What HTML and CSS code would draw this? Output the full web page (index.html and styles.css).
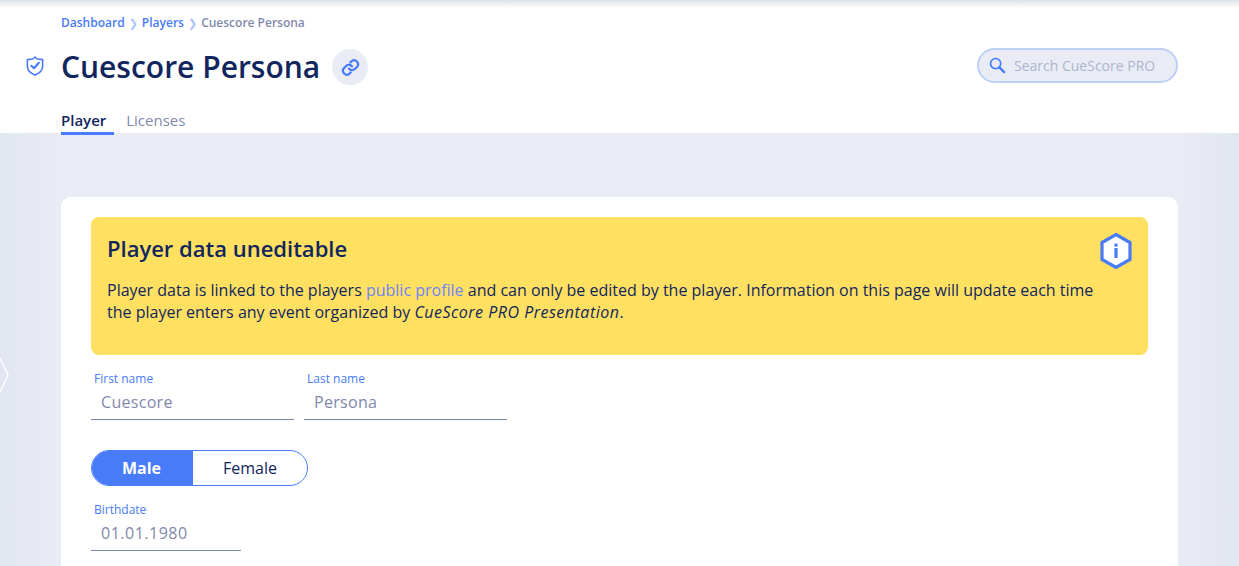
FILE: index.html
```html
<!DOCTYPE html>
<html lang="en">
<head>
<meta charset="utf-8">
<title>Cuescore Persona</title>
<link rel="stylesheet" href="styles.css">
</head>
<body>
<header class="header">
  <nav class="crumbs">
    <a href="#">Dashboard</a><span class="sep">❯</span><a href="#">Players</a><span class="sep">❯</span><span class="here">Cuescore Persona</span>
  </nav>
  <div class="title-row">
    <svg class="shield" viewBox="0 0 18 20" width="18" height="20" fill="none" stroke="#477bf9" stroke-linejoin="round" stroke-linecap="round">
      <path stroke-width="1.6" d="M9 1.2 11.2 3 16.6 3.6V10.5C16.6 14.5 13 17.4 9 19 5 17.4 1.4 14.5 1.4 10.5V3.6L6.8 3Z"/>
      <path stroke-width="2.1" d="M5.4 9.8 8 12.3 12.8 6.8"/>
    </svg>
    <h1 class="title">Cuescore Persona</h1>
    <button class="link-btn" aria-label="Copy link">
      <svg viewBox="0 0 24 24" width="19" height="19" fill="none" stroke="#477bf9" stroke-width="2.8" stroke-linecap="round" stroke-linejoin="round">
        <path d="M10 13.5a5 5 0 0 0 7.5.5l3-3a5 5 0 0 0-7-7l-1.7 1.7"/>
        <path d="M14 10.5a5 5 0 0 0-7.5-.5l-3 3a5 5 0 0 0 7 7l1.7-1.7"/>
      </svg>
    </button>
    <div class="search">
      <svg viewBox="0 0 18 18" width="17" height="17" fill="none" stroke="#477bf9" stroke-linecap="round">
        <circle cx="7" cy="7" r="5.4" stroke-width="1.8"/>
        <path d="M11 11 16 16" stroke-width="2.4"/>
      </svg>
      <span class="search-text">Search CueScore PRO</span>
    </div>
  </div>
  <div class="tabs">
    <a class="tab active" href="#">Player</a>
    <a class="tab" href="#">Licenses</a>
  </div>
</header>
<main class="content">
  <svg class="side-hex" viewBox="0 0 10 36" width="10" height="36" fill="none" stroke="#fff" stroke-width="1.4"><path d="M0 1 8 18 0 35"/></svg>
  <section class="card">
    <div class="notice">
      <svg class="info" viewBox="0 0 34 38" width="34" height="38">
        <path d="M17 2.5 31 10.5V27.5L17 35.5 3 27.5V10.5Z" fill="#fff" stroke="#477bf9" stroke-width="3.2"/>
        <rect x="15.4" y="16" width="3.2" height="10" fill="#477bf9"/>
        <rect x="15.4" y="11.6" width="3.2" height="3" fill="#477bf9"/>
      </svg>
      <h2 class="notice-title">Player data uneditable</h2>
      <p class="notice-text">Player data is linked to the players <a href="#">public profile</a> and can only be edited by the player. Information on this page will update each time the player enters any event organized by <em>CueScore PRO Presentation</em>.</p>
    </div>
    <div class="name-row">
      <div class="field wide"><label>First name</label><div class="value">Cuescore</div></div>
      <div class="field wide"><label>Last name</label><div class="value">Persona</div></div>
    </div>
    <div class="toggle">
      <span class="opt on">Male</span><span class="opt">Female</span>
    </div>
    <div class="field narrow"><label>Birthdate</label><div class="value date">01.01.1980</div></div>
  </section>
</main>
</body>
</html>
```
FILE: styles.css
```css
* { box-sizing: border-box; }
html, body { margin: 0; height: 100%; overflow: hidden; }
body {
  font-family: "Open Sans", "Noto Sans", sans-serif;
  color: #12265e;
  background: #e9ecf5;
}
a { text-decoration: none; }
.header {
  height: 133px;
  background: #fff;
  padding: 14px 61px 0;
  position: relative;
  z-index: 1;
  background-image: linear-gradient(#dce2ea, #fff 8px);
}
.crumbs { font-size: 12px; line-height: 17px; height: 17px; font-weight: 600; color: #7f89ab; white-space: nowrap; }
.crumbs a { color: #477bf9; }
.sep { color: #a9c2f7; margin: 0 4px; font-size: 11px; font-family: "DejaVu Sans", sans-serif; font-weight: 400; }
.here { color: #7f89ab; }
.title-row { display: flex; align-items: center; height: 36px; margin-top: 18px; position: relative; }
.shield { position: absolute; left: -35px; top: 7px; }
.title { margin: 0; font-size: 30px; font-weight: 600; line-height: 36px; color: #12265e; }
.link-btn {
  width: 36px; height: 36px; border-radius: 50%; border: 0; padding: 0;
  background: #e9ecf5; margin-left: 12px;
  display: flex; align-items: center; justify-content: center;
}
.search {
  margin-left: auto; width: 201px; height: 35px; border-radius: 18px;
  background: #e9ecf5; border: 2px solid #bed0f3;
  display: flex; align-items: center; padding-left: 10px; gap: 8px;
  align-self: flex-start; margin-top: -1px;
}
.search-text { font-size: 14px; color: #aeb5cd; }
.tabs { display: flex; gap: 12px; margin-top: 23px; }
.tab {
  font-size: 15px; line-height: 20px; height: 27px; padding: 2px 0 0; color: #7f89ab;
  border-bottom: 3px solid transparent;
}
.tab.active { color: #12265e; font-weight: 600; padding-right: 8px; border-bottom-color: #477bf9; }
.content {
  position: relative; height: 433px; padding: 64px 61px 0;
  background: linear-gradient(90deg, #e2e6f0, #e9ecf5 60px, #e9ecf5 calc(100% - 60px), #e2e6f0);
}
.side-hex { position: absolute; left: 0; top: 224px; }
.card { background: #fff; border-radius: 10px; padding: 20px 30px 0; height: 500px; }
.notice {
  position: relative; height: 138px; background: #ffe061; border-radius: 8px;
  padding: 16px 16px 0; 
}
.info { position: absolute; right: 15px; top: 15px; }
.notice-title { margin: 0; font-size: 22px; line-height: 30px; font-weight: 600; color: #12265e; }
.notice-text { margin: 16px 0 0; font-size: 16px; line-height: 22px; color: #12265e; width: 1010px; }
.notice-text a { color: #6e84f5; }
.notice-text em { letter-spacing: 0.5px; }
.name-row { display: flex; gap: 10px; margin-top: 16px; }
.field { display: block; }
.wide { width: 203px; }
.narrow { width: 150px; margin-top: 16px; }
.field label { display: block; font-size: 12px; line-height: 16px; color: #477bf9; padding-left: 3px; }
.value {
  height: 33px; border-bottom: 1px solid #7f89ab; padding: 3px 0 0 10px;
  font-size: 16px; line-height: 24px; color: #7f89ab; letter-spacing: 0.3px;
}
.date { letter-spacing: 0.5px; }
.toggle {
  display: inline-flex; width: 217px; height: 36px; margin-top: 30px;
  border: 1px solid #477bf9; border-radius: 18px; overflow: hidden; vertical-align: top;
}
.opt { font-size: 16px; line-height: 34px; text-align: center; color: #12265e; flex: 1 1 0; }
.opt.on { flex: 0 0 101px; background: #477bf9; color: #fff; font-weight: 700; padding-right: 2px; }
```
